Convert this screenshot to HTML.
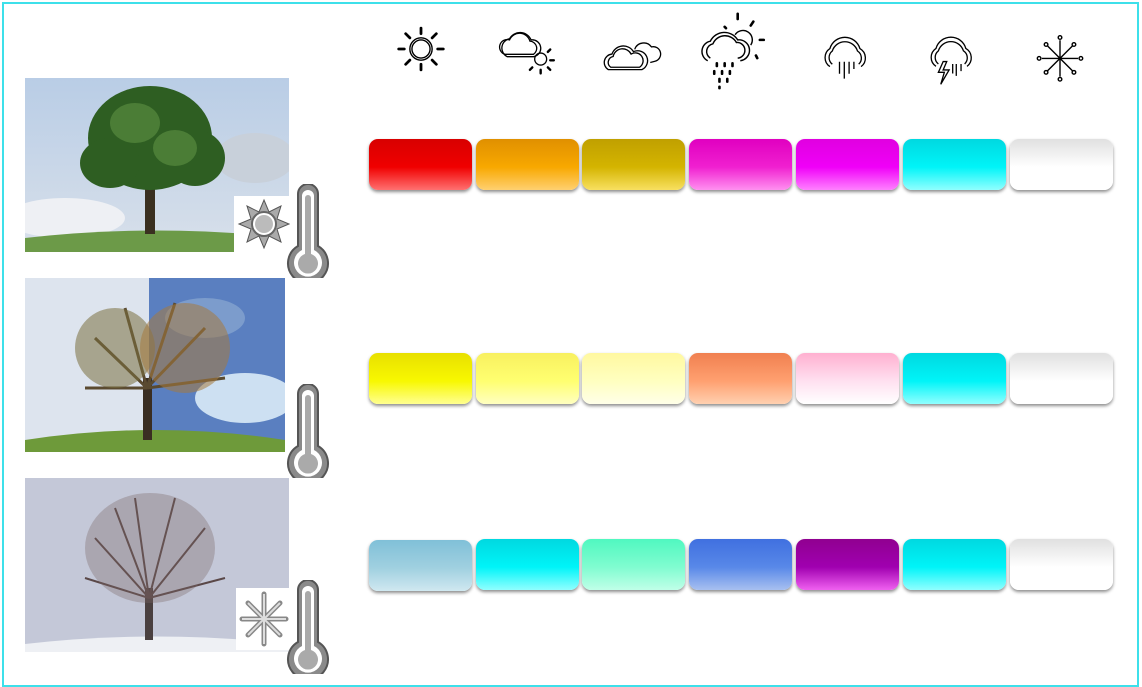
<!DOCTYPE html>
<html><head><meta charset="utf-8"><style>
body{margin:0;width:1142px;height:687px;background:#fff;position:relative;overflow:hidden;font-family:"Liberation Sans",sans-serif}
.frame{position:absolute;left:2px;top:2px;width:1133px;height:681px;border:2px solid #3de0ea}
.sw{position:absolute;width:103px;height:51px;border-radius:9px;box-shadow:0 2px 3px rgba(0,0,0,.45)}
.ic{position:absolute}
.img{position:absolute;left:25px;overflow:hidden}
</style></head><body>
<div class="frame"></div>

<!-- weather icons -->
<svg class="ic" style="left:386px;top:10px" width="70" height="78" viewBox="0 0 50 56" fill="none" stroke="#000" stroke-width="1">
<circle cx="25" cy="28" r="8"/><circle cx="25" cy="28" r="6.5"/>
<g stroke-width="2" stroke-linecap="round" fill="none"><path d="M25 13v4M25 39v4M9 28h4M37 28h4M14 17l3 3M33 36l3 3M36 17l-3 3M17 36l-3 3"/></g></svg>
<svg class="ic" style="left:495px;top:16px" width="65" height="67" viewBox="0 0 54 56" fill="none" stroke="#000" stroke-width="1.1">
<path d="M8 32a6 6 0 0 1 4-12a9 9 0 0 1 17 1a6 6 0 0 1 3 11z"/><path d="M10 34a8 8 0 0 1 2-15a10 10 0 0 1 18 1a7 7 0 0 1 2 14z"/>
<circle cx="38" cy="36" r="5"/><g stroke-width="2" stroke-linecap="round"><path d="M38 45v3M46 37h3M44 30l2-2M44 43l2 2M31 43l-2 2"/></g></svg>
<svg class="ic" style="left:601px;top:17px" width="65" height="67" viewBox="0 0 54 56" fill="none" stroke="#000" stroke-width="1.1">
<path d="M6 44a7 7 0 0 1 3-13a10 10 0 0 1 18-2a7 7 0 0 1 7 15z"/><path d="M8 42a5 5 0 0 1 2-9a8 8 0 0 1 15-2a5 5 0 0 1 7 11z"/>
<path d="M28 27a8 8 0 0 1 14-2a6 6 0 0 1 3 12l-4 1"/></svg>
<svg class="ic" style="left:696px;top:6px" width="86" height="86" viewBox="0 0 66 66" fill="none" stroke="#000" stroke-width="1.1">
<path d="M9 42a8 8 0 0 1 2-15a12 12 0 0 1 21-1a8 8 0 0 1 2 16"/><path d="M11 40a6 6 0 0 1 2-11a10 10 0 0 1 18-1a6 6 0 0 1 1 12"/>
<path d="M30 22a7 7 0 0 1 12 8"/><g stroke-width="2" stroke-linecap="round"><path d="M32 6v4M44 12l-2 3M49 26h3M46 38l1 2M22 16l1 1"/>
<path d="M16 44v2M22 44v2M28 44v2M14 50v2M20 50v2M26 50v2M18 56v2M24 56v2M18 62v1"/></g></svg>
<svg class="ic" style="left:813px;top:21px" width="65" height="72" viewBox="0 0 54 60" fill="none" stroke="#000" stroke-width="1.1">
<path d="M14 38a9 9 0 0 1 0-15a13 13 0 0 1 25 0a9 9 0 0 1 1 15"/><path d="M16 36a7 7 0 0 1 0-11a11 11 0 0 1 21 0a7 7 0 0 1 1 11"/>
<path d="M22 34v10M26 34v14M30 34v10M34 34v6"/></svg>
<svg class="ic" style="left:919px;top:21px" width="65" height="74" viewBox="0 0 54 62" fill="none" stroke="#000" stroke-width="1.1">
<path d="M14 38a9 9 0 0 1 0-15a13 13 0 0 1 25 0a9 9 0 0 1 1 15"/><path d="M16 36a7 7 0 0 1 0-11a11 11 0 0 1 21 0a7 7 0 0 1 1 11"/>
<path d="M20 34l-4 9h5l-3 10 7-12h-5l3-7z"/><path d="M28 36v8M31 36v10M35 36v6"/></svg>
<svg class="ic" style="left:1025px;top:18px" width="70" height="78" viewBox="0 0 50 56" fill="none" stroke="#000" stroke-width="1">
<path d="M25 16v26M12 29h26M16 20l18 18M34 20l-18 18"/>
<g fill="#fff"><circle cx="25" cy="14" r="1.3"/><circle cx="25" cy="44" r="1.3"/><circle cx="10" cy="29" r="1.3"/><circle cx="40" cy="29" r="1.3"/><circle cx="15" cy="19" r="1.3"/><circle cx="35" cy="19" r="1.3"/><circle cx="15" cy="39" r="1.3"/><circle cx="35" cy="39" r="1.3"/></g></svg>

<!-- tree images -->
<svg class="img" style="top:78px" width="264" height="174" viewBox="0 0 264 174">
<defs><linearGradient id="sk1" x1="0" y1="0" x2="0" y2="1"><stop offset="0" stop-color="#b9cde6"/><stop offset="1" stop-color="#d8e0ea"/></linearGradient></defs>
<rect width="264" height="174" fill="url(#sk1)"/><ellipse cx="40" cy="140" rx="60" ry="20" fill="#eef0f4"/><ellipse cx="230" cy="80" rx="40" ry="25" fill="#c8d0da"/>
<path d="M0 174v-14q130-15 264 0v14z" fill="#6c9a48"/><rect x="120" y="110" width="10" height="46" fill="#3a3020"/>
<g fill="#2e5e22"><ellipse cx="125" cy="60" rx="62" ry="52"/><ellipse cx="85" cy="85" rx="30" ry="25"/><ellipse cx="170" cy="80" rx="30" ry="28"/></g>
<g fill="#4b7d36"><ellipse cx="110" cy="45" rx="25" ry="20"/><ellipse cx="150" cy="70" rx="22" ry="18"/></g></svg>
<svg class="img" style="top:278px" width="260" height="174" viewBox="0 0 260 174">
<rect width="124" height="174" fill="#dde4ee"/><rect x="124" width="136" height="174" fill="#5a7fc0"/>
<ellipse cx="220" cy="120" rx="50" ry="25" fill="#cde0f2"/><ellipse cx="180" cy="40" rx="40" ry="20" fill="#7c9ccc"/>
<path d="M0 174v-12q130-20 260 0v12z" fill="#6e9a3a"/><rect x="118" y="100" width="9" height="62" fill="#3a2e22"/>
<g fill="none" stroke="#5a4a30" stroke-width="3"><path d="M122 110L70 60M122 110L180 50M122 110L100 30M122 110L150 25M122 110L200 100M122 110L60 110"/></g>
<ellipse cx="90" cy="70" rx="40" ry="40" fill="#7a7040" opacity=".55"/><ellipse cx="160" cy="70" rx="45" ry="45" fill="#a67a3e" opacity=".55"/></svg>
<svg class="img" style="top:478px" width="264" height="174" viewBox="0 0 264 174">
<rect width="264" height="174" fill="#c4c8d8"/><path d="M0 174v-8q130-15 264 0v8z" fill="#eef0f4"/>
<rect x="120" y="110" width="8" height="52" fill="#4a4040"/>
<g fill="none" stroke="#5a4848" stroke-width="2"><path d="M124 120L70 60M124 120L180 50M124 120L110 20M124 120L150 20M124 120L200 100M124 120L60 100M124 120L90 30"/></g>
<ellipse cx="125" cy="70" rx="65" ry="55" fill="#7a6868" opacity=".35"/></svg>

<!-- overlay icons -->
<svg style="position:absolute;left:234px;top:196px" width="56" height="60" viewBox="0 0 56 60">
<rect width="56" height="60" fill="#fff"/><polygon points="30,4 35,16 47,10 43,23 55,28 43,33 47,46 35,40 30,52 25,40 13,46 17,33 5,28 17,23 13,10 25,16" fill="#aaa" stroke="#555"/>
<circle cx="30" cy="28" r="12" fill="#fff" stroke="#666" stroke-width="2"/><circle cx="30" cy="28" r="9" fill="#bbb"/></svg>
<svg style="position:absolute;left:236px;top:588px" width="56" height="62" viewBox="0 0 56 62">
<rect width="56" height="62" fill="#fff"/><g stroke="#888" stroke-width="5" stroke-linecap="round"><path d="M28 6v50M6 31h44M12 15l32 32M44 15L12 47"/></g>
<g stroke="#ddd" stroke-width="2"><path d="M28 6v50M6 31h44M12 15l32 32M44 15L12 47"/></g></svg>
<svg style="position:absolute;left:284px;top:184px" width="48" height="94" viewBox="0 0 48 94">
<path d="M14 8a10 10 0 0 1 20 0v52a20 20 0 1 1-20 0z" fill="#8a8a8a" stroke="#555" stroke-width="2" transform="translate(0,2)"/>
<path d="M18 10a6 6 0 0 1 12 0v54a14 14 0 1 1-12 0z" fill="#fff" transform="translate(0,2)"/>
<path d="M21 12a3 3 0 0 1 6 0v56a10 10 0 1 1-6 0z" fill="#aaa" transform="translate(0,2)"/></svg>
<svg style="position:absolute;left:284px;top:384px" width="48" height="94" viewBox="0 0 48 94">
<path d="M14 8a10 10 0 0 1 20 0v52a20 20 0 1 1-20 0z" fill="#8a8a8a" stroke="#555" stroke-width="2" transform="translate(0,2)"/>
<path d="M18 10a6 6 0 0 1 12 0v54a14 14 0 1 1-12 0z" fill="#fff" transform="translate(0,2)"/>
<path d="M21 12a3 3 0 0 1 6 0v56a10 10 0 1 1-6 0z" fill="#aaa" transform="translate(0,2)"/></svg>
<svg style="position:absolute;left:284px;top:580px" width="48" height="94" viewBox="0 0 48 94">
<path d="M14 8a10 10 0 0 1 20 0v52a20 20 0 1 1-20 0z" fill="#8a8a8a" stroke="#555" stroke-width="2" transform="translate(0,2)"/>
<path d="M18 10a6 6 0 0 1 12 0v54a14 14 0 1 1-12 0z" fill="#fff" transform="translate(0,2)"/>
<path d="M21 12a3 3 0 0 1 6 0v56a10 10 0 1 1-6 0z" fill="#aaa" transform="translate(0,2)"/></svg>

<!-- swatches -->
<div class="sw" style="left:369px;top:139px;background:linear-gradient(#d80000,#f00000 55%,#ff7070)"></div>
<div class="sw" style="left:476px;top:139px;background:linear-gradient(#e09000,#f8a800 55%,#ffd070)"></div>
<div class="sw" style="left:582px;top:139px;background:linear-gradient(#c0a000,#d4b400 55%,#f8e060)"></div>
<div class="sw" style="left:689px;top:139px;background:linear-gradient(#e000c0,#f020d0 55%,#ff90f0)"></div>
<div class="sw" style="left:796px;top:139px;background:linear-gradient(#e000e0,#f000f8 55%,#ff80ff)"></div>
<div class="sw" style="left:903px;top:139px;background:linear-gradient(#00d8e0,#00f4f8 55%,#90ffff)"></div>
<div class="sw" style="left:1010px;top:139px;background:linear-gradient(#e0e0e0,#fff 55%,#fff)"></div>

<div class="sw" style="left:369px;top:353px;background:linear-gradient(#e8e000,#f8f800 55%,#ffff90)"></div>
<div class="sw" style="left:476px;top:353px;background:linear-gradient(#f8f060,#ffff70 55%,#ffffc0)"></div>
<div class="sw" style="left:582px;top:353px;background:linear-gradient(#fff8a0,#ffffc0 55%,#ffffe8)"></div>
<div class="sw" style="left:689px;top:353px;background:linear-gradient(#f08050,#ffa070 55%,#ffd0b0)"></div>
<div class="sw" style="left:796px;top:353px;background:linear-gradient(#ffb0d0,#ffe0f0 55%,#fff)"></div>
<div class="sw" style="left:903px;top:353px;background:linear-gradient(#00d8e0,#00f4f8 55%,#90ffff)"></div>
<div class="sw" style="left:1010px;top:353px;background:linear-gradient(#e0e0e0,#fff 55%,#fff)"></div>

<div class="sw" style="left:369px;top:540px;background:linear-gradient(#80c0d8,#a0d0e0 55%,#d0e8f0)"></div>
<div class="sw" style="left:476px;top:539px;background:linear-gradient(#00d8e0,#00f4f8 55%,#90ffff)"></div>
<div class="sw" style="left:582px;top:539px;background:linear-gradient(#50f8c0,#80fcd0 55%,#c0ffe8)"></div>
<div class="sw" style="left:689px;top:539px;background:linear-gradient(#4070e0,#5888e8 55%,#a8c0f0)"></div>
<div class="sw" style="left:796px;top:539px;background:linear-gradient(#900090,#a000b0 55%,#f060f0)"></div>
<div class="sw" style="left:903px;top:539px;background:linear-gradient(#00d8e0,#00f4f8 55%,#90ffff)"></div>
<div class="sw" style="left:1010px;top:539px;background:linear-gradient(#e0e0e0,#fff 55%,#fff)"></div>
</body></html>
